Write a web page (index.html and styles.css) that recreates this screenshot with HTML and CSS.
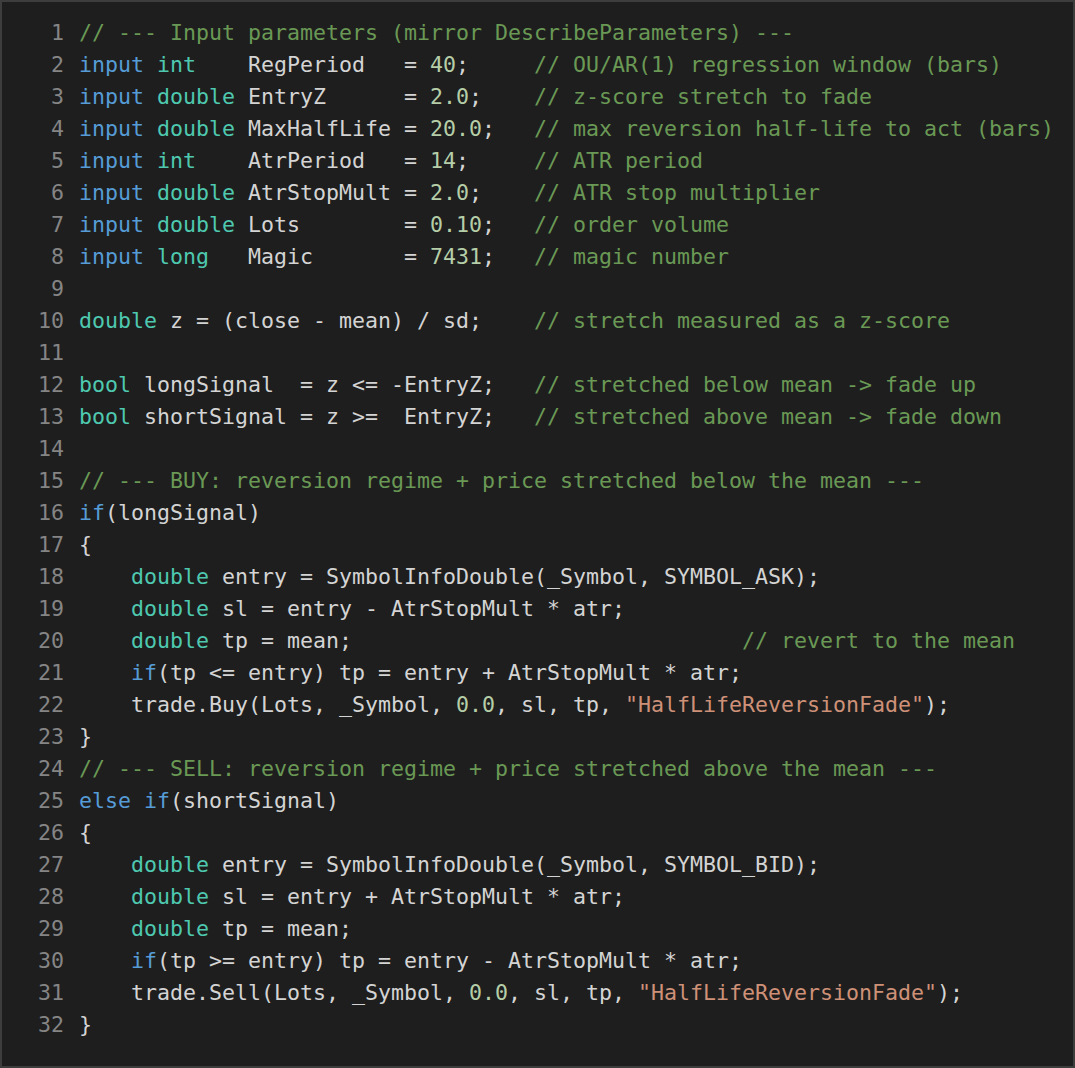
FILE: index.html
```html
<!DOCTYPE html>
<html>
<head>
<meta charset="utf-8">
<link rel="stylesheet" href="styles.css">
</head>
<body>
<div class="editor">
<div class="line"><span class="ln">1</span><span class="code"><span class="c">// --- Input parameters (mirror DescribeParameters) ---</span></span></div>
<div class="line"><span class="ln">2</span><span class="code"><span class="k">input</span> <span class="t">int</span>    RegPeriod   = <span class="n">40</span>;     <span class="c">// OU/AR(1) regression window (bars)</span></span></div>
<div class="line"><span class="ln">3</span><span class="code"><span class="k">input</span> <span class="t">double</span> EntryZ      = <span class="n">2.0</span>;    <span class="c">// z-score stretch to fade</span></span></div>
<div class="line"><span class="ln">4</span><span class="code"><span class="k">input</span> <span class="t">double</span> MaxHalfLife = <span class="n">20.0</span>;   <span class="c">// max reversion half-life to act (bars)</span></span></div>
<div class="line"><span class="ln">5</span><span class="code"><span class="k">input</span> <span class="t">int</span>    AtrPeriod   = <span class="n">14</span>;     <span class="c">// ATR period</span></span></div>
<div class="line"><span class="ln">6</span><span class="code"><span class="k">input</span> <span class="t">double</span> AtrStopMult = <span class="n">2.0</span>;    <span class="c">// ATR stop multiplier</span></span></div>
<div class="line"><span class="ln">7</span><span class="code"><span class="k">input</span> <span class="t">double</span> Lots        = <span class="n">0.10</span>;   <span class="c">// order volume</span></span></div>
<div class="line"><span class="ln">8</span><span class="code"><span class="k">input</span> <span class="t">long</span>   Magic       = <span class="n">7431</span>;   <span class="c">// magic number</span></span></div>
<div class="line"><span class="ln">9</span><span class="code"></span></div>
<div class="line"><span class="ln">10</span><span class="code"><span class="t">double</span> z = (close - mean) / sd;    <span class="c">// stretch measured as a z-score</span></span></div>
<div class="line"><span class="ln">11</span><span class="code"></span></div>
<div class="line"><span class="ln">12</span><span class="code"><span class="t">bool</span> longSignal  = z &lt;= -EntryZ;   <span class="c">// stretched below mean -&gt; fade up</span></span></div>
<div class="line"><span class="ln">13</span><span class="code"><span class="t">bool</span> shortSignal = z &gt;=  EntryZ;   <span class="c">// stretched above mean -&gt; fade down</span></span></div>
<div class="line"><span class="ln">14</span><span class="code"></span></div>
<div class="line"><span class="ln">15</span><span class="code"><span class="c">// --- BUY: reversion regime + price stretched below the mean ---</span></span></div>
<div class="line"><span class="ln">16</span><span class="code"><span class="k">if</span>(longSignal)</span></div>
<div class="line"><span class="ln">17</span><span class="code">{</span></div>
<div class="line"><span class="ln">18</span><span class="code">    <span class="t">double</span> entry = SymbolInfoDouble(_Symbol, SYMBOL_ASK);</span></div>
<div class="line"><span class="ln">19</span><span class="code">    <span class="t">double</span> sl = entry - AtrStopMult * atr;</span></div>
<div class="line"><span class="ln">20</span><span class="code">    <span class="t">double</span> tp = mean;                              <span class="c">// revert to the mean</span></span></div>
<div class="line"><span class="ln">21</span><span class="code">    <span class="k">if</span>(tp &lt;= entry) tp = entry + AtrStopMult * atr;</span></div>
<div class="line"><span class="ln">22</span><span class="code">    trade.Buy(Lots, _Symbol, <span class="n">0.0</span>, sl, tp, <span class="s">"HalfLifeReversionFade"</span>);</span></div>
<div class="line"><span class="ln">23</span><span class="code">}</span></div>
<div class="line"><span class="ln">24</span><span class="code"><span class="c">// --- SELL: reversion regime + price stretched above the mean ---</span></span></div>
<div class="line"><span class="ln">25</span><span class="code"><span class="k">else</span> <span class="k">if</span>(shortSignal)</span></div>
<div class="line"><span class="ln">26</span><span class="code">{</span></div>
<div class="line"><span class="ln">27</span><span class="code">    <span class="t">double</span> entry = SymbolInfoDouble(_Symbol, SYMBOL_BID);</span></div>
<div class="line"><span class="ln">28</span><span class="code">    <span class="t">double</span> sl = entry + AtrStopMult * atr;</span></div>
<div class="line"><span class="ln">29</span><span class="code">    <span class="t">double</span> tp = mean;</span></div>
<div class="line"><span class="ln">30</span><span class="code">    <span class="k">if</span>(tp &gt;= entry) tp = entry - AtrStopMult * atr;</span></div>
<div class="line"><span class="ln">31</span><span class="code">    trade.Sell(Lots, _Symbol, <span class="n">0.0</span>, sl, tp, <span class="s">"HalfLifeReversionFade"</span>);</span></div>
<div class="line"><span class="ln">32</span><span class="code">}</span></div>
</div>
</body>
</html>
```
FILE: styles.css
```css
html, body {
  margin: 0;
  padding: 0;
  background: #1e1e1e;
}
.editor {
  box-sizing: border-box;
  width: 1075px;
  height: 1068px;
  border: 2px solid #3d3d3d;
  background: #1e1e1e;
  padding-top: 15px;
  font-family: "DejaVu Sans Mono", "Liberation Mono", monospace;
  font-size: 21.6px;
  line-height: 32px;
  color: #d4d4d4;
  overflow: hidden;
}
.line {
  display: flex;
  height: 32px;
  white-space: pre;
}
.ln {
  width: 62px;
  flex: none;
  text-align: right;
  margin-right: 15px;
  color: #858585;
}
.code { white-space: pre; }
.c { color: #6a9955; }
.k { color: #569cd6; }
.t { color: #4ec9b0; }
.n { color: #b5cea8; }
.s { color: #ce9178; }
```
